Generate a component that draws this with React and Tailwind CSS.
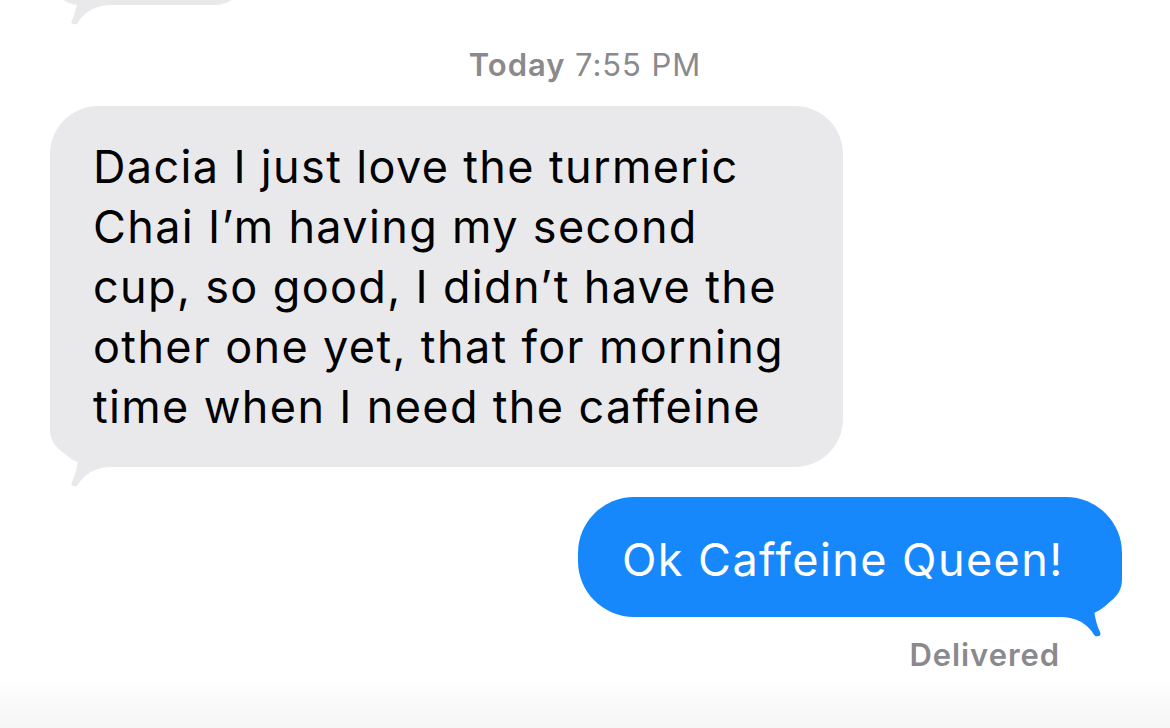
import React from "react";

function Tail({ color, flip }) {
    return (
        <svg
            className={`absolute -bottom-[20px] w-[80px] h-[67px] ${flip ? "right-0 -scale-x-100" : "left-0"}`}
            viewBox="0 0 80 67"
            fill={color}
        >
            <path d="M0 0 L0 10 C0 28 18 36 28 40 C27 48 25 56 22 62 C20 66 24 67 27 66 C32 58 40 48 60 47 L80 47 L80 0 Z" />
        </svg>
    );
}

export default function App() {
    return (
        <div className="w-[1170px] h-[728px] overflow-hidden bg-linear-to-b from-white from-[93%] to-[#f5f5f5] font-['Inter',sans-serif] flex flex-col">
            {/* previous message, only its bottom edge is visible */}
            <div className="relative ml-[50px] -mt-[55px] w-[195px] h-[60px] shrink-0 rounded-[48px] bg-[#e9e9eb]">
                <Tail color="#e9e9eb" />
            </div>

            <div className="mt-[41px] text-center text-[31px] leading-[38px] tracking-[0.03em] text-[#8a8a8e]">
                <span className="font-semibold">Today</span> 7:55 PM
            </div>

            <div className="relative ml-[50px] mt-[22px] w-[793px] rounded-[48px] bg-[#e9e9eb] pl-[43px] pt-[31px] pb-[30px] text-[45px] leading-[60px] tracking-[0.03em] text-black whitespace-nowrap">
                <Tail color="#e9e9eb" />
                <p className="relative">
                    Dacia I just love the turmeric
                    <br />
                    Chai I’m having my second
                    <br />
                    cup, so good, I didn’t have the
                    <br />
                    other one yet, that for morning
                    <br />
                    time when I need the caffeine
                </p>
            </div>

            <div className="relative ml-[578px] mt-[30px] w-[544px] rounded-[56px] rounded-br-[47px] bg-[#1788fb] pl-[44px] pt-[33px] pb-[27px] text-[45px] leading-[60px] tracking-[0.032em] text-white whitespace-nowrap">
                <Tail color="#1788fb" flip />
                <p className="relative">Ok Caffeine Queen!</p>
            </div>

            <div className="mt-[19px] mr-[110px] text-right text-[31px] leading-[37px] tracking-[0.03em] font-semibold text-[#8a8a8e]">
                Delivered
            </div>
        </div>
    );
}
